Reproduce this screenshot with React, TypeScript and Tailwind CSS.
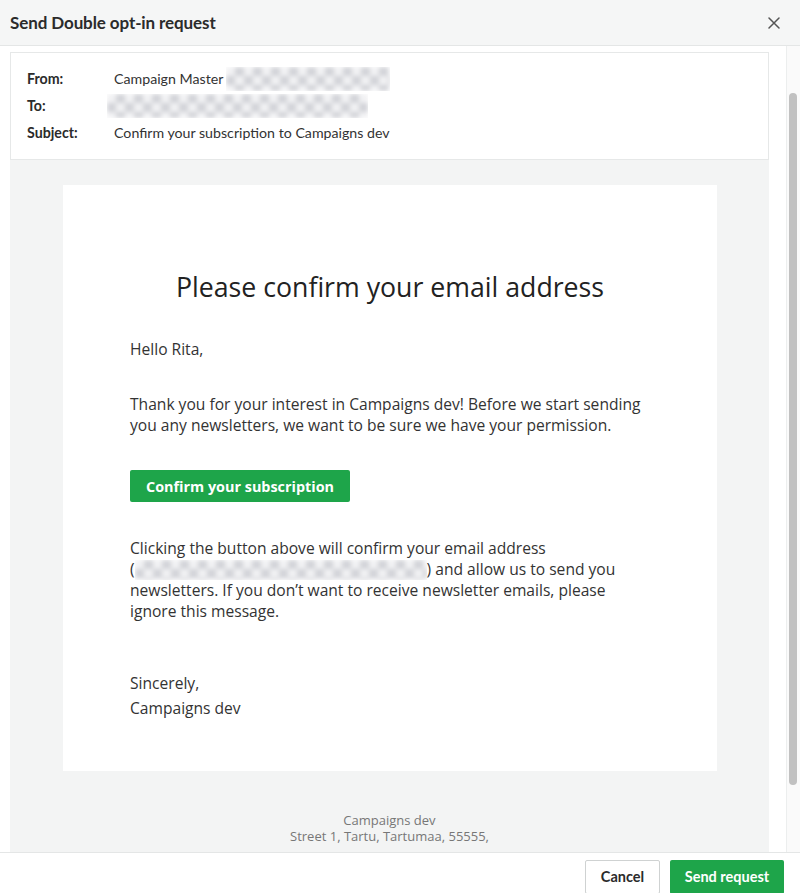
import React from "react";

function Blur({ className }: { className: string }) {
  return (
    <span
      className={
        "inline-block align-middle overflow-hidden " + className
      }
    >
      <span className="block w-full h-full bg-[repeating-conic-gradient(#d3d4d9_0%_25%,#f1f1f3_0%_50%)] bg-[length:18px_18px] blur-[2px]" />
    </span>
  );
}

export default function App() {
  return (
    <div className="w-[800px] h-[893px] flex flex-col bg-white overflow-hidden font-['Lato','Noto_Sans',sans-serif] text-[#222]">
      {/* Header */}
      <div className="h-[46px] shrink-0 bg-[#f5f6f6] border-b border-[#e4e6e6] flex items-center justify-between pl-[10px] pr-[20px]">
        <div className="text-[17px] font-bold text-[#2b2b2b] tracking-[-0.1px]">Send Double opt-in request</div>
        <svg width="12" height="12" viewBox="0 0 12 12" className="text-[#555]">
          <path d="M1 1L11 11M11 1L1 11" stroke="currentColor" strokeWidth="1.5" strokeLinecap="round" />
        </svg>
      </div>

      {/* Body */}
      <div className="flex-1 flex min-h-0">
        <div className="flex-1 min-w-0 overflow-hidden pl-[10px] pr-[17px] pt-[6px]">
          <div className="flex flex-col">
            {/* email headers */}
            <div className="bg-white border border-[#e6e8e8] pt-[12px] pb-[13px] pl-[16px] text-[14.2px] text-[#333]">
              <div className="h-[27px] flex items-center">
                <span className="w-[87px] font-bold text-[#2b2b2b]">From:</span>
                <span>Campaign Master</span>
                <Blur className="ml-[3px] w-[164px] h-[24px]" />
              </div>
              <div className="h-[27px] flex items-center">
                <span className="w-[80px] font-bold text-[#2b2b2b]">To:</span>
                <Blur className="w-[261px] h-[24px]" />
              </div>
              <div className="h-[27px] flex items-center">
                <span className="w-[87px] font-bold text-[#2b2b2b]">Subject:</span>
                <span>Confirm your subscription to Campaigns dev</span>
              </div>
            </div>

            {/* email preview */}
            <div className="bg-[#f3f4f4] pt-[25px] pb-[60px] font-['Open_Sans',sans-serif]">
              <div className="ml-[53px] w-[654px] bg-white pt-[83px] pb-[50px] px-[67px] text-[#333] text-[15.6px] leading-[21px]">
                <h1 className="text-center text-[26.7px] leading-[38px] text-[#222] font-normal">
                  Please confirm your email address
                </h1>
                <p className="mt-[33px]">Hello Rita,</p>
                <p className="mt-[34px]">
                  Thank you for your interest in Campaigns dev! Before we start sending you any newsletters, we want to be sure we have your permission.
                </p>
                <div className="mt-[34px]">
                  <span className="inline-flex items-center h-[32px] px-[16px] bg-[#1ea54a] text-white text-[14.4px] font-bold rounded-[2px]">
                    Confirm your subscription
                  </span>
                </div>
                <p className="mt-[36px]">
                  Clicking the button above will confirm your email address{" "}
                  <span className="whitespace-nowrap">
                    (<Blur className="w-[292px] h-[20px] -mt-[2px]" />)
                  </span>{" "}
                  and allow us to send you newsletters. If you don’t want to receive newsletter emails, please ignore this message.
                </p>
                <p className="mt-[49px] leading-[25px]">
                  Sincerely,
                  <br />
                  Campaigns dev
                </p>
              </div>
              <div className="mt-[41px] text-center text-[13px] leading-[16px] text-[#777]">
                <div>Campaigns dev</div>
                <div>Street 1, Tartu, Tartumaa, 55555,</div>
              </div>
            </div>
          </div>
        </div>
        {/* scrollbar */}
        <div className="w-[14px] shrink-0 border-l border-[#eceeee] bg-[#fafafa] pt-[47px] pl-[2px]">
          <div className="w-[8px] h-[692px] rounded-[4px] bg-[#c1c1c1]" />
        </div>
      </div>

      {/* Footer */}
      <div className="h-[41px] shrink-0 border-t border-[#e4e6e6] bg-white flex justify-end items-start pt-[7px] pr-[16px] gap-[10px]">
        <button className="h-[34px] w-[75px] border border-[#cfd2d2] bg-white rounded-[2px] text-[14.5px] font-bold text-[#2b2b2b]">
          Cancel
        </button>
        <button className="h-[34px] w-[114px] bg-[#1ea54a] rounded-[2px] text-[14.5px] font-bold text-white">
          Send request
        </button>
      </div>
    </div>
  );
}
